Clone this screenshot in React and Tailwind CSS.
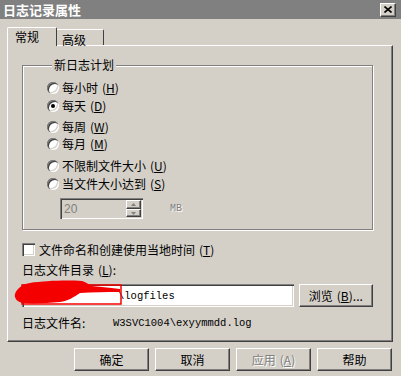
import React from 'react';

const raised = "bg-[#d4d0c8] border border-t-white border-l-white border-r-[#404040] border-b-[#404040] shadow-[inset_-1px_-1px_0_#808080]";
const sunken = "shadow-[inset_1px_1px_0_#808080,inset_2px_2px_0_#404040,inset_-1px_-1px_0_#fff,inset_-2px_-2px_0_#d4d0c8]";

const Radio = ({ checked }) => (
    <span className={`w-[12px] h-[12px] rounded-full bg-white shrink-0 flex items-center justify-center ${sunken}`}>
        {checked && <span className="w-[4px] h-[4px] rounded-full bg-black" />}
    </span>
);

const Key = ({ k }) => (
    <span className="ml-[4px]">(<u>{k}</u>)</span>
);

const Option = ({ label, k, checked, className }) => (
    <div className={`flex items-center h-[14px] gap-[3px] ${className}`}>
        <Radio checked={checked} />
        <span>{label}<Key k={k} /></span>
    </div>
);

const Button = ({ children, disabled }) => (
    <button className={`w-[75px] h-[23px] flex items-center justify-center ${raised} ${disabled ? 'text-[#808080] [text-shadow:1px_1px_0_#fff]' : 'text-black'}`}>
        {children}
    </button>
);

const App = () => {
    return (
        <div className="w-[401px] h-[376px] bg-[#d4d0c8] overflow-hidden text-[12px] leading-[14px] text-black font-['Noto_Sans_CJK_SC',sans-serif]">
            {/* Title bar */}
            <div className="h-[19px] bg-[#808080] flex items-center justify-between pl-[3px] pr-[5px]">
                <span className="text-white font-bold text-[13px]">日志记录属性</span>
                <button className={`w-[16px] h-[14px] flex items-center justify-center ${raised}`}>
                    <svg width="8" height="7" viewBox="0 0 8 7">
                        <path d="M0.5 0.5 L7.5 6.5 M7.5 0.5 L0.5 6.5" stroke="#000" strokeWidth="1.6" />
                    </svg>
                </button>
            </div>

            <div className="pl-[7px] pr-[8px]">
                {/* Tabs */}
                <div className="flex items-end h-[26px]">
                    <div className="relative z-10 -mb-[1px] w-[50px] h-[19px] bg-[#d4d0c8] border-t border-l border-white border-r border-r-[#404040] rounded-t-[2px] pl-[7px] pt-[2px]">
                        常规
                    </div>
                    <div className="w-[47px] h-[16px] border-t border-t-white border-r border-r-[#404040] rounded-tr-[2px] pl-[5px] pt-[3px]">
                        高级
                    </div>
                </div>

                {/* Panel */}
                <div className="h-[297px] border border-t-white border-l-white border-r-[#404040] border-b-[#404040] shadow-[inset_-1px_-1px_0_#808080] pl-[14px] pr-[19px] pt-[12px]">
                    <fieldset className="h-[172px] border border-[#808080] shadow-[inset_1px_1px_0_#fff,1px_1px_0_#fff] pl-[24px] pt-[9px]">
                        <legend className="ml-[5px] px-[2px] bg-[#d4d0c8] leading-[14px]">新日志计划</legend>
                        <Option label="每小时" k="H" />
                        <Option label="每天" k="D" checked className="mt-[4px]" />
                        <Option label="每周" k="W" className="mt-[7px]" />
                        <Option label="每月" k="M" className="mt-[3px]" />
                        <Option label="不限制文件大小" k="U" className="mt-[8px]" />
                        <Option label="当文件大小达到" k="S" className="mt-[4px]" />
                        <div className="flex items-center mt-[7px] ml-[13px]">
                            <div className={`w-[83px] h-[21px] bg-[#d4d0c8] flex items-center justify-between pl-[4px] pr-[2px] ${sunken}`}>
                                <span className="text-[#808080] font-['Liberation_Sans',sans-serif] text-[12px]">20</span>
                                <div className="flex flex-col w-[15px] gap-0">
                                    <span className={`h-[9px] flex items-center justify-center ${raised}`}>
                                        <svg width="5" height="3" viewBox="0 0 5 3"><path d="M2.5 0 L5 3 L0 3 Z" fill="#808080" /></svg>
                                    </span>
                                    <span className={`h-[8px] flex items-center justify-center ${raised}`}>
                                        <svg width="5" height="3" viewBox="0 0 5 3"><path d="M0 0 L5 0 L2.5 3 Z" fill="#808080" /></svg>
                                    </span>
                                </div>
                            </div>
                            <span className="ml-[27px] text-[10px] text-[#808080] [text-shadow:1px_1px_0_#fff] font-['Liberation_Mono',monospace]">MB</span>
                        </div>
                    </fieldset>

                    <div className="flex items-center h-[13px] mt-[13px] gap-[4px]">
                        <span className={`w-[13px] h-[13px] bg-white shrink-0 ${sunken}`} />
                        <span>文件命名和创建使用当地时间<Key k="T" /></span>
                    </div>

                    <div className="mt-[7px]">日志文件目录<Key k="L" />:</div>

                    <div className="relative flex items-center mt-[7px] gap-[5px]">
                        <div className={`w-[273px] h-[23px] bg-white flex items-center pl-[96px] font-['Liberation_Mono',monospace] text-[10.5px] ${sunken}`}>
                            \logfiles
                        </div>
                        <Button><span className="text-[12px]">浏览<Key k="B" />...</span></Button>
                        <svg className="absolute -left-[8px] -top-[5px]" width="110" height="30" viewBox="0 0 110 30">
                            <rect x="8" y="6" width="99" height="19" fill="none" stroke="#f40000" strokeWidth="1.5" />
                            <path d="M1 15 C3 9 9 5 16 4 C30 2 50 1 68 2 C72 3 74 5 78 7 C88 8 98 9 106 10 L106 13 C92 13 78 13 66 14 C60 18 54 22 46 23 C34 24 20 25 9 24 C3 23 0 19 1 15 Z" fill="#f40000" />
                        </svg>
                    </div>

                    <div className="flex items-center mt-[9px]">
                        <span className="w-[91px]">日志文件名:</span>
                        <span className="font-['Liberation_Mono',monospace] text-[10.5px]">W3SVC1004\exyymmdd.log</span>
                    </div>
                </div>
            </div>

            {/* Dialog buttons */}
            <div className="flex justify-end gap-[6px] pr-[9px] mt-[6px]">
                <Button>确定</Button>
                <Button>取消</Button>
                <Button disabled>应用<Key k="A" /></Button>
                <Button>帮助</Button>
            </div>
        </div>
    );
};

export default App;
